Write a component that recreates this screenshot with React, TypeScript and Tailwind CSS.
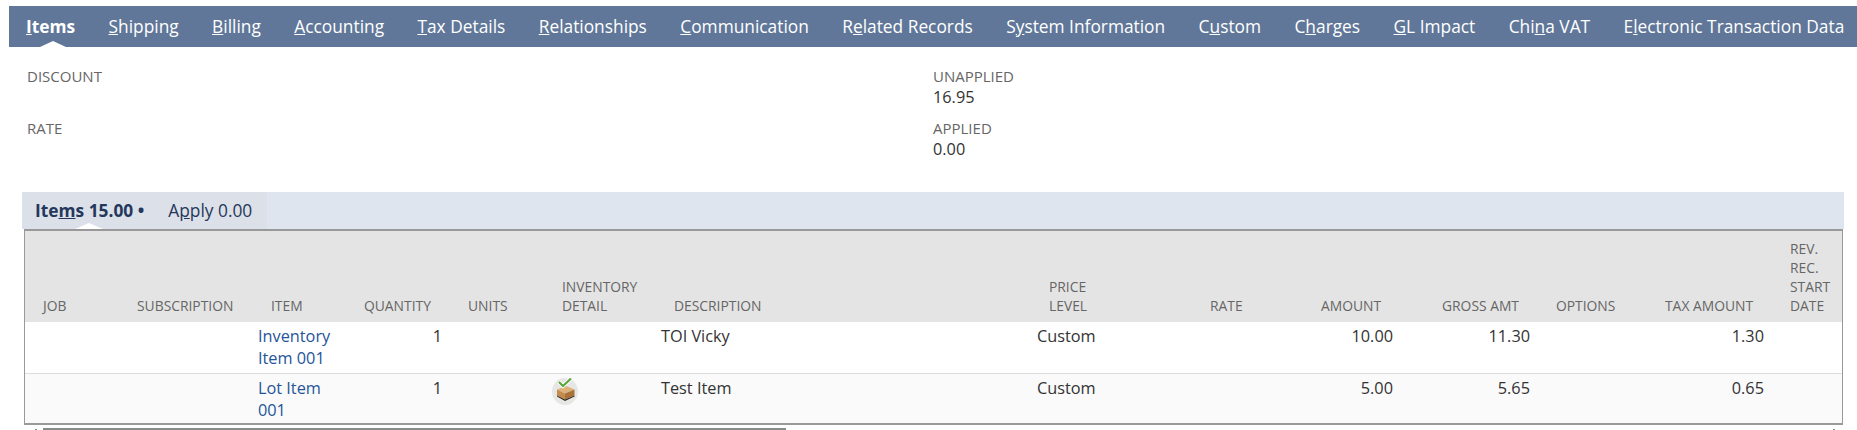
import React from 'react';

const tabs: [string, string, string][] = [
  ['', 'S', 'hipping'],
  ['', 'B', 'illing'],
  ['', 'A', 'ccounting'],
  ['', 'T', 'ax Details'],
  ['', 'R', 'elationships'],
  ['', 'C', 'ommunication'],
  ['R', 'e', 'lated Records'],
  ['S', 'y', 'stem Information'],
  ['C', 'u', 'stom'],
  ['C', 'h', 'arges'],
  ['', 'G', 'L Impact'],
  ['Chi', 'n', 'a VAT'],
  ['E', 'l', 'ectronic Transaction Data'],
];

function BoxIcon() {
  return (
    <svg width="26" height="27" viewBox="0 0 26 27">
      <ellipse cx="13" cy="13.5" rx="13" ry="13.5" fill="#e6e6e4" />
      <path d="M14 8 L22.5 11.5 L13 15.5 L5 11.5 Z" fill="#dcb27a" />
      <path d="M5 11.5 L13 15.5 L13 21.5 L5 17.5 Z" fill="#c48c4c" />
      <path d="M22.5 11.5 L13 15.5 L13 21.5 L22.5 17.5 Z" fill="#a8723a" />
      <path d="M5 17.5 L13 21.5 L22.5 17.5 L22.5 18.5 L13 23 L5 18.5 Z" fill="#33291d" />
      <path d="M7 4 L11 8 L19 0.5" fill="none" stroke="#ffffff" strokeWidth="4" />
      <path d="M7 4 L11 8 L19 0.5" fill="none" stroke="#5aa83c" strokeWidth="2.2" />
    </svg>
  );
}

function Header({ lines }: { lines: string[] }) {
  return (
    <th className="align-bottom pb-[7px] pl-[18px] text-left text-[13.85px] font-normal leading-[19px] text-[#666666]">
      {lines.map((l) => (
        <div key={l} className="whitespace-nowrap">{l}</div>
      ))}
    </th>
  );
}

function Row({ item, qty, icon, desc, amount, gross, tax, className }: {
  item: string[]; qty: string; icon?: boolean; desc: string; amount: string; gross: string; tax: string; className: string;
}) {
  return (
    <tr className={`align-top text-[16.3px] leading-[22px] text-[#333333] ${className}`}>
      <td />
      <td />
      <td className="pl-[5px] pt-[3px] text-[#255599]">
        {item.map((l) => (
          <div key={l}>{l}</div>
        ))}
      </td>
      <td className="pr-[8px] pt-[3px] text-right">{qty}</td>
      <td />
      <td className="pl-[8px] pt-[4px]">{icon && <BoxIcon />}</td>
      <td className="pl-[5px] pt-[3px]">{desc}</td>
      <td className="pl-[6px] pt-[3px]">Custom</td>
      <td />
      <td className="pr-[31px] pt-[3px] text-right">{amount}</td>
      <td className="pr-[8px] pt-[3px] text-right">{gross}</td>
      <td />
      <td className="pr-[8px] pt-[3px] text-right">{tax}</td>
      <td />
    </tr>
  );
}

export default function App() {
  return (
    <div className="h-[430px] overflow-hidden bg-white pt-[6px] font-['Open_Sans',sans-serif]">
      <div className="relative ml-[9px] flex h-[41px] items-center gap-[33.4px] whitespace-nowrap bg-[#607799] pl-[17px] text-[17.33px] text-white">
        <span className="font-bold"><u>I</u>tems</span>
        {tabs.map(([a, b, c]) => (
          <span key={a + b + c}>{a}<u>{b}</u>{c}</span>
        ))}
        <div className="absolute bottom-0 left-[31px] h-0 w-0 border-x-[13px] border-b-[6px] border-x-transparent border-b-white" />
      </div>

      <div className="flex h-[145px] text-[16.3px]">
        <div className="ml-[27px] w-[906px] pt-[19px] text-[15px] leading-[20px] text-[#666666]">
          <div className="h-[52px]">DISCOUNT</div>
          <div>RATE</div>
        </div>
        <div className="pt-[19px] leading-[20px]">
          <div className="text-[15px] text-[#666666]">UNAPPLIED</div>
          <div className="h-[32px] pt-[1px] text-[#333333]">16.95</div>
          <div className="text-[15px] text-[#666666]">APPLIED</div>
          <div className="pt-[1px] text-[#333333]">0.00</div>
        </div>
      </div>

      <div className="relative ml-[22px] mr-[13px] flex h-[37px] items-center bg-[#dfe5ef] text-[17.33px] text-[#24385b]">
        <div className="flex h-full w-[245px] items-center bg-[#dce0e9] pl-[13px]">
          <span className="font-bold"><span>Ite</span><u>m</u>s 15.00 •</span>
          <span className="ml-[24px]">A<u>p</u>ply 0.00</span>
        </div>
        <div className="absolute bottom-0 left-[53px] h-0 w-0 border-x-[14px] border-b-[6px] border-x-transparent border-b-white" />
      </div>

      <div className="ml-[24px] mr-[14px] border-x border-b-2 border-t-2 border-[#999999]">
        <table className="w-full table-fixed border-collapse">
          <colgroup>
            <col className="w-[94px]" />
            <col className="w-[134px]" />
            <col className="w-[93px]" />
            <col className="w-[104px]" />
            <col className="w-[94px]" />
            <col className="w-[112px]" />
            <col className="w-[375px]" />
            <col className="w-[161px]" />
            <col className="w-[111px]" />
            <col className="w-[121px]" />
            <col className="w-[114px]" />
            <col className="w-[109px]" />
            <col className="w-[125px]" />
            <col />
          </colgroup>
          <thead>
            <tr className="h-[91px] bg-[#e4e4e4]">
              <Header lines={['JOB']} />
              <Header lines={['SUBSCRIPTION']} />
              <Header lines={['ITEM']} />
              <Header lines={['QUANTITY']} />
              <Header lines={['UNITS']} />
              <Header lines={['INVENTORY', 'DETAIL']} />
              <Header lines={['DESCRIPTION']} />
              <Header lines={['PRICE', 'LEVEL']} />
              <Header lines={['RATE']} />
              <Header lines={['AMOUNT']} />
              <Header lines={['GROSS AMT']} />
              <Header lines={['OPTIONS']} />
              <Header lines={['TAX AMOUNT']} />
              <Header lines={['REV.', 'REC.', 'START', 'DATE']} />
            </tr>
          </thead>
          <tbody>
            <Row item={['Inventory', 'Item 001']} qty="1" desc="TOI Vicky" amount="10.00" gross="11.30" tax="1.30" className="h-[51px] border-b border-[#dddddd] bg-white" />
            <Row item={['Lot Item', '001']} qty="1" icon desc="Test Item" amount="5.00" gross="5.65" tax="0.65" className="h-[50px] bg-[#fafafa]" />
          </tbody>
        </table>
      </div>
      <div className="ml-[35px] mr-[22px] mt-[3px] flex h-[2px] items-start justify-between">
        <div className="flex items-start gap-[6px]">
          <div className="mt-[1px] h-[1px] w-[2px] bg-[#8a8a8a]" />
          <div className="h-[2px] w-[743px] bg-[#8a8a8a]" />
        </div>
        <div className="mt-[1px] h-[1px] w-[2px] bg-[#8a8a8a]" />
      </div>
    </div>
  );
}
